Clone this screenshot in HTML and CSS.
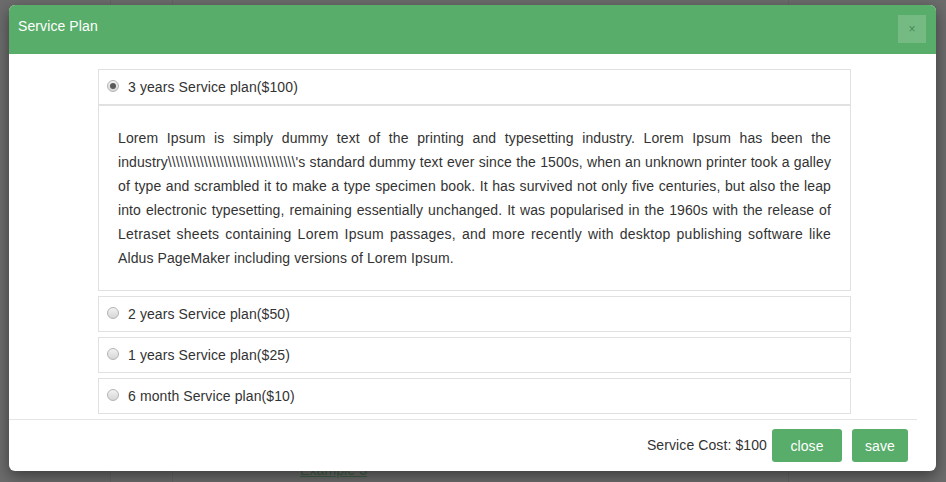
FILE: index.html
```html
<!DOCTYPE html>
<html>
<head>
<meta charset="utf-8">
<link rel="stylesheet" href="styles.css">
</head>
<body>
<div class="page">
  <div class="page-cols">
    <span class="col-line l1"></span><span class="col-line l2"></span><span class="col-line l3"></span>
  </div>
  <a class="page-link" href="#">Example 3</a>
</div>

<div class="modal">
  <div class="modal-header">
    <span class="modal-title">Service Plan</span>
    <button class="close-x">×</button>
  </div>
  <div class="modal-body">
    <div class="panel-group">
      <div class="panel open">
        <div class="panel-heading"><span class="radio checked"></span><span class="label">3 years Service plan($100)</span></div>
        <div class="panel-body">
          <p>Lorem Ipsum is simply dummy text of the printing and typesetting industry. Lorem Ipsum has been the industry\\\\\\\\\\\\\\\\\\\\\\\\\\\\\\\\'s standard dummy text ever since the 1500s, when an unknown printer took a galley of type and scrambled it to make a type specimen book. It has survived not only five centuries, but also the leap into electronic typesetting, remaining essentially unchanged. It was popularised in the 1960s with the release of <span class="wide">Letraset sheets containing Lorem Ipsum passages, and more recently with desktop publishing software like</span> Aldus PageMaker including versions of Lorem Ipsum.</p>
        </div>
      </div>
      <div class="panel">
        <div class="panel-heading"><span class="radio"></span><span class="label">2 years Service plan($50)</span></div>
      </div>
      <div class="panel">
        <div class="panel-heading"><span class="radio"></span><span class="label">1 years Service plan($25)</span></div>
      </div>
      <div class="panel">
        <div class="panel-heading"><span class="radio"></span><span class="label">6 month Service plan($10)</span></div>
      </div>
    </div>
  </div>
  <div class="modal-footer">
    <span class="cost">Service Cost: $100</span>
    <button class="btn btn-close">close</button>
    <button class="btn btn-save">save</button>
  </div>
</div>
</body>
</html>
```

FILE: styles.css
```css
html, body {
  margin: 0;
  padding: 0;
}
body {
  width: 946px;
  height: 482px;
  overflow: hidden;
  background: #6c6c6c;
  font-family: "Liberation Sans", Arial, sans-serif;
  font-size: 14px;
  letter-spacing: 0.1px;
  color: #333;
  position: relative;
}
.page {
  height: 482px;
  position: relative;
}
.page-cols {
  position: absolute;
  inset: 0;
}
.col-line {
  position: absolute;
  top: 0;
  bottom: 0;
  width: 1px;
  background: rgba(0, 0, 0, 0.06);
}
.l1 { left: 110px; }
.l2 { left: 172px; }
.l3 { left: 788px; }
.page-link {
  position: absolute;
  left: 300px;
  top: 460px;
  font-size: 14px;
  line-height: 20px;
  color: #3e5e46;
  text-decoration: underline;
}
.modal {
  position: absolute;
  top: 5px;
  left: 9px;
  width: 927px;
  background: #fff;
  border-radius: 6px;
  box-shadow: 0 5px 15px rgba(0, 0, 0, 0.45);
}
.modal-header {
  height: 49px;
  box-sizing: border-box;
  background: #59ad6a;
  border-radius: 6px 6px 0 0;
  padding: 10px 10px 0 9px;
  display: flex;
  justify-content: space-between;
  align-items: flex-start;
}
.modal-title {
  color: #fff;
  font-size: 14px;
  line-height: 20px;
  margin-top: 1px;
}
.close-x {
  width: 28px;
  height: 28px;
  border: 0;
  padding: 0;
  background: rgba(255, 255, 255, 0.17);
  color: #458a55;
  font-family: "Liberation Sans", Arial, sans-serif;
  font-size: 12px;
  line-height: 28px;
  text-align: center;
}
.modal-body {
  padding: 15px 0 5px 0;
}
.panel-group {
  width: 753px;
  margin-left: 89px;
  display: flex;
  flex-direction: column;
  gap: 5px;
}
.panel {
  border: 1px solid #e1e1e1;
  background: #fff;
}
.panel-heading {
  height: 34px;
  display: flex;
  align-items: center;
  padding-left: 8px;
}
.open .panel-heading {
  border-bottom: 1px solid #e1e1e1;
}
.radio {
  width: 12px;
  height: 12px;
  box-sizing: border-box;
  border-radius: 50%;
  border: 1px solid #b4b4b4;
  background: linear-gradient(#f2f2f2, #d6d6d6);
  margin-top: -3px;
  margin-right: 9px;
  position: relative;
  flex: none;
}
.radio.checked::after {
  content: "";
  position: absolute;
  left: 2px;
  top: 2px;
  width: 6px;
  height: 6px;
  border-radius: 50%;
  background: #5a5a5a;
}
.label {
  color: #333;
  font-size: 14px;
  line-height: 20px;
}
.panel-body {
  border-top: 1px solid #e1e1e1;
  padding: 20px 19px 20px 19px;
}
.panel-body p {
  margin: 0;
  line-height: 24px;
  text-align: justify;
  color: #333;
}
.wide {
  letter-spacing: 0.25px;
}
.modal-footer {
  margin-right: 19px;
  border-top: 1px solid #e5e5e5;
  height: 52px;
  box-sizing: border-box;
  padding: 9px 9px 0 0;
  display: flex;
  justify-content: flex-end;
  align-items: flex-start;
}
.cost {
  line-height: 33px;
  margin-right: 5px;
  color: #333;
}
.btn {
  height: 33px;
  border: 0;
  border-radius: 3px;
  background: #59ad6a;
  color: #fff;
  font-family: "Liberation Sans", Arial, sans-serif;
  font-size: 14px;
  letter-spacing: 0.1px;
  padding: 0;
  text-align: center;
}
.btn-close {
  width: 70px;
}
.btn-save {
  width: 56px;
  margin-left: 10px;
}
```
